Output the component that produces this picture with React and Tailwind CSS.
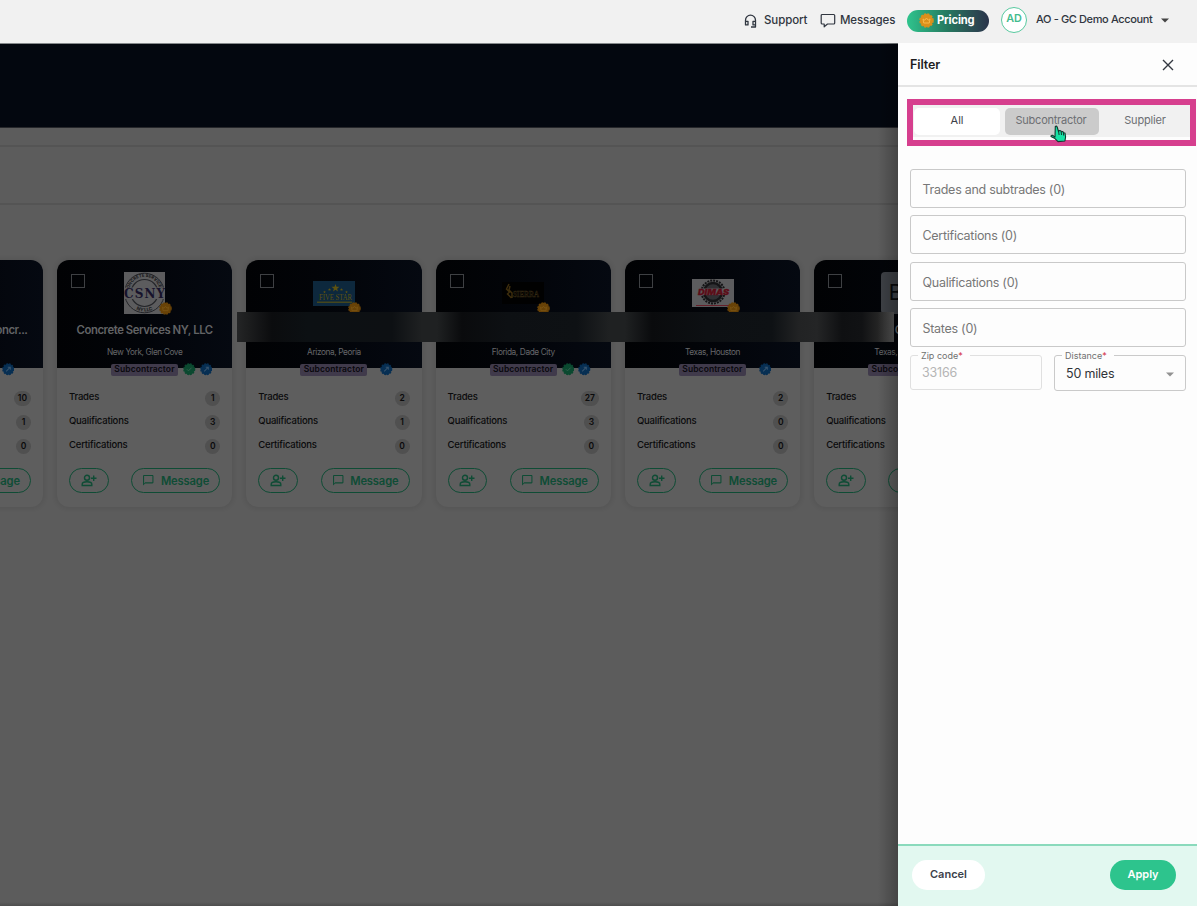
import React from "react";
import { MdChatBubbleOutline } from "react-icons/md";

function Seal({ size, color, children }) {
  return (
    <svg width={size} height={size} viewBox="0 0 24 24" className="block shrink-0">
      <circle cx="12" cy="12" r="10.4" fill={color} stroke={color} strokeWidth="2.4" strokeDasharray="3.6 1.85" />
      {children}
    </svg>
  );
}

function CrownSeal({ size, color, crown }) {
  return (
    <Seal size={size} color={color}>
      <path d="M6.500 9.500l2.700 2L12 8l2.800 3.500 2.700-2-1 6.500h-9z" fill="none" stroke={crown} strokeWidth="1.600" />
    </Seal>
  );
}

function PersonPlus() {
  return (
    <svg width="16" height="13" viewBox="0 0 16 13" fill="none" stroke="currentColor" strokeWidth="1.400" className="block">
      <circle cx="6" cy="3.700" r="2.500" />
      <path d="M1.200 11.500v-1.200c0-1.600 2.600-2.500 4.800-2.500s4.800.9 4.800 2.500v1.200z" />
      <path d="M12.700 1.500v5.600M9.900 4.300h5.600" />
    </svg>
  );
}

function CsnyLogo() {
  return (
    <svg width="41" height="42" viewBox="0 0 41 42" className="block">
      <rect width="41" height="42" fill="#5c5c5e" />
      <circle cx="20.500" cy="21" r="19.800" fill="none" stroke="#25262a" strokeWidth="1" />
      <circle cx="20.500" cy="21" r="13.500" fill="none" stroke="#25262a" strokeWidth="1.200" />
      <defs>
        <path id="csny-top" d="M5.300 20a15.200 15.200 0 0 1 30.400 0" />
        <path id="csny-bottom" d="M2 21a18.500 18.500 0 0 0 37 0" />
      </defs>
      <text fontSize="4.600" fontWeight="800" fill="#1c1c20" fontFamily="Inter, sans-serif" textLength="46" lengthAdjust="spacingAndGlyphs"><textPath href="#csny-top">CONCRETE SERVICES</textPath></text>
      <text fontSize="4.800" fontWeight="800" fill="#1c1c20" fontFamily="Inter, sans-serif"><textPath href="#csny-bottom" startOffset="50%" textAnchor="middle">NY LLC</textPath></text>
      <rect y="15.500" width="41" height="11.500" fill="#5c5c5e" />
      <text x="0" y="26" fontSize="13" fontWeight="700" fill="#17132c" fontFamily="DejaVu Serif, serif" textLength="41" lengthAdjust="spacing">
        <tspan fontSize="12">CSNY</tspan>
      </text>
    </svg>
  );
}

function FiveStarLogo() {
  const star = "M0-4L1-1.2 4-1.2 1.6.7 2.5 3.6 0 1.8-2.5 3.6-1.6.7-4-1.2-1-1.2z";
  return (
    <svg width="42" height="25" viewBox="0 0 42 25" className="block">
      <rect width="42" height="25" fill="#0d283d" />
      <g fill="#5e5210">
        <path d={star} transform="translate(22.500 7)" />
        <path d={star} transform="translate(16.500 8.500) scale(.4)" />
        <path d={star} transform="translate(28.500 8.500) scale(.4)" />
        <path d={star} transform="translate(11.500 11) scale(.35)" />
        <path d={star} transform="translate(33.500 11) scale(.35)" />
        <text x="6" y="19" fontSize="8.500" fontFamily="Liberation Serif, serif" textLength="33" lengthAdjust="spacingAndGlyphs">FIVE STAR</text>
        <rect x="4" y="20.500" width="35" height="1.500" opacity=".7" />
      </g>
    </svg>
  );
}

function GoldLogo() {
  return (
    <svg width="42" height="22" viewBox="0 0 42 22" className="block">
      <rect width="42" height="22" fill="#010101" />
      <path d="M7 2L4.500 7l3 3-2 2 4 4M8 4l-1 4 3 3v5" fill="none" stroke="#3d2d0d" strokeWidth="1.500" />
      <text x="11" y="15" fontSize="9" fontWeight="700" fill="#110e07" stroke="#352913" strokeWidth=".4" fontFamily="Liberation Serif, serif" textLength="26" lengthAdjust="spacingAndGlyphs">SIERRA</text>
    </svg>
  );
}

function DimasLogo() {
  return (
    <svg width="42" height="28" viewBox="0 0 42 28" className="block">
      <rect width="42" height="28" fill="#5c5c5e" />
      <circle cx="21" cy="13" r="11.500" fill="none" stroke="#151517" strokeWidth="2" strokeDasharray="2 1" />
      <circle cx="21" cy="13" r="9" fill="#303033" stroke="#151517" strokeWidth="2.500" />
      <rect x="6" y="9.500" width="30" height="6.500" fill="#5c5c5e" />
      <text x="6" y="15.500" fontSize="8" fontWeight="900" fontStyle="italic" fill="#5b0d18" stroke="#5b0d18" strokeWidth=".3" fontFamily="Inter, sans-serif" textLength="31" lengthAdjust="spacingAndGlyphs">DIMAS</text>
      <rect x="4" y="26" width="34" height="1" fill="#65202a" />
    </svg>
  );
}

function LetterLogo() {
  return <div className="h-[42px] w-[42px] rounded-sm bg-[#3e4146] pl-2 pt-1 text-[21px] leading-[33px] text-[#08090b]">B</div>;
}

const cards = [
  { name: "All Pro Builder Concr...", place: "", check: false, counts: [10, 1, 0] },
  { name: "Concrete Services NY, LLC", place: "New York, Glen Cove", check: true, counts: [1, 3, 0], Logo: CsnyLogo, crown: true },
  { name: "", place: "Arizona, Peoria", check: false, counts: [2, 1, 0], Logo: FiveStarLogo, crown: true },
  { name: "", place: "Florida, Dade City", check: true, counts: [27, 3, 0], Logo: GoldLogo, crown: true },
  { name: "", place: "Texas, Houston", check: false, counts: [2, 0, 0], Logo: DimasLogo, crown: true },
  { name: "Co", place: "Texas, Houston", check: false, counts: [1, 0, 0], Logo: LetterLogo, crown: false },
];
const labels = ["Trades", "Qualifications", "Certifications"];

function Card({ card, first }) {
  const { Logo } = card;
  return (
    <div className="flex h-[247px] w-[175.300px] shrink-0 flex-col rounded-[12px] bg-[#5e5e5e] shadow-[0_0_4px_2px_rgba(0,0,0,0.07)]">
      <div className="relative flex h-[107.500px] shrink-0 flex-col items-center rounded-t-[12px] bg-linear-to-r from-[#010204] to-[#050911]">
        <div className="absolute left-[14px] top-[14px] size-[14px] border border-[#3e4043]" />
        <div className="relative mt-[12px] flex h-[42px] w-[42px] items-center justify-center">
          {Logo && <Logo />}
          {card.crown && <div className="absolute -bottom-[0.500px] -right-[6px]"><CrownSeal size={13} color="#684207" crown="#7b5514" /></div>}
        </div>
        <div className={"mt-[8px] h-[16px] whitespace-nowrap text-[11.300px] font-semibold leading-[16px] tracking-[-0.420px] text-[#626365] " + (first ? "self-end pr-[15.500px]" : "")}>{card.name}</div>
        <div className="mt-[7px] h-[14px] whitespace-nowrap text-[8.300px] leading-[14px] tracking-[-0.400px] text-[#66676a]">{card.place}</div>
        <div className="absolute left-[54px] top-[103px] flex h-[13px] items-center">
          <div className="flex h-[12px] w-[67px] items-center justify-center rounded-[2px] bg-[#403a4b] text-[8.500px] font-semibold tracking-[0.100px] text-[#09080d]">Subcontractor</div>
          <div className={card.check ? "ml-[5px] w-[16.500px]" : "ml-[5px] w-[8px]"}>
            {card.check && <Seal size={12.500} color="#0b4930"><path d="M7.500 12l3 3 6-6" fill="none" stroke="#36614f" strokeWidth="1.800" /></Seal>}
          </div>
          <Seal size={12.500} color="#072f53"><path d="M8 16l7-7m-4-1h5v5" fill="none" stroke="#35526c" strokeWidth="2" /></Seal>
        </div>
      </div>
      <div className="flex flex-col px-3 pt-[18px]">
        {labels.map((l, i) => (
          <div key={l} className="flex h-6 items-center justify-between text-[9.500px] font-medium text-[#0a0a0b]">
            <span className="-mt-[1px] tracking-[-0.200px]">{l}</span>
            <span className="mt-[1px] flex h-[15px] min-w-[15px] items-center justify-center rounded-full bg-[#505050] px-[4px] text-[8.500px] font-semibold">{card.counts[i]}</span>
          </div>
        ))}
      </div>
      <div className="mt-[10.500px] flex justify-between px-3 text-[#0f4c35]">
        <div className="flex h-[25px] w-[39.500px] items-center justify-center rounded-full border border-[#0f4c35] pb-[1px]"><PersonPlus /></div>
        <div className="flex h-[25px] w-[89px] items-center justify-center gap-[6px] rounded-full border border-[#0f4c35] text-[11.200px] font-semibold tracking-[-0.150px]">
          <MdChatBubbleOutline size={12.500} />
          <span className="mt-[1px]">Message</span>
        </div>
      </div>
    </div>
  );
}

function Header() {
  return (
    <header className="flex h-[43px] shrink-0 items-center bg-[#f1f1f1] pb-[3px] pl-[744px] text-[11.500px] font-medium text-[#303640]">
      <svg width="13" height="14" viewBox="0 0 13 14" fill="none" stroke="currentColor" strokeWidth="1.300" strokeLinejoin="round" className="mt-[1px] shrink-0">
        <path d="M1.500 10.500V6.200a5 5 0 0 1 10 0v4.300M1.500 7.300H4v3.600H1.500zM11.500 7.300H9v3.600h2.500zM11.500 10.500V13H7" />
      </svg>
      <span className="ml-[7px] mt-[1px] w-[56px] shrink-0 tracking-[-0.100px]">Support</span>
      <svg width="16" height="15" viewBox="0 0 16 15" fill="none" stroke="currentColor" strokeWidth="1.200" strokeLinejoin="round" className="mt-[1px] shrink-0">
        <path d="M2.200 1.500h11.500a1 1 0 0 1 1 1v7.500a1 1 0 0 1-1 1H7.500L4.200 13.800V11h-2a1 1 0 0 1-1-1V2.500a1 1 0 0 1 1-1z" />
      </svg>
      <span className="ml-[4px] mt-[1px] w-[67px] shrink-0 tracking-[-0.120px]">Messages</span>
      <div className="mt-[1px] flex h-[22px] w-[82px] shrink-0 items-center gap-[3px] rounded-full bg-linear-to-r from-[#2fc48d] via-[#24785f] to-[#29334a] pl-[12px] font-bold text-white">
        <CrownSeal size={15} color="#db901b" crown="#f7b94a" />
        <span className="text-[11.200px] tracking-[-0.150px]">Pricing</span>
      </div>
      <div className="ml-[12px] flex size-[26px] shrink-0 items-center justify-center rounded-full border border-[#58c99f] bg-white pb-[1px] text-[10.800px] font-semibold text-[#43bb8e]">AD</div>
      <span className="-mt-[2px] ml-[9px] w-[125px] shrink-0 whitespace-nowrap text-[11px] tracking-[-0.370px]">AO - GC Demo Account</span>
      <svg width="8" height="5" viewBox="0 0 8 5" className="shrink-0"><path d="M0 .5h8l-4 4z" fill="#444" /></svg>
    </header>
  );
}

function Field({ label }) {
  return <div className="flex h-[39px] items-center rounded-[3px] border border-[#c9c9c9] px-[11.500px] pt-[4px] text-[12.500px] tracking-[-0.280px] text-[#777]">{label}</div>;
}

function LabeledField({ label, children, className }) {
  return (
    <div className={"relative flex w-[132px] items-center justify-between rounded-[3px] border px-[11px] " + className}>
      <span className="absolute -top-[6px] left-[7px] bg-[#fdfdfd] pl-[3px] pr-[7px] text-[9px] leading-[12px] tracking-normal text-[#707070]">{label}<span className="text-[#d32f3f]">*</span></span>
      {children}
    </div>
  );
}

function Cursor() {
  return (
    <svg width="17" height="18" viewBox="0 0 17 18" className="absolute left-[45px] top-[17px]">
      <path d="M5.300 1.500Q6.500.5 7.200 2l1.300 4.500.3-1 2 .3.500 1 1.500-.3 1 1.300 1.200.2.600 4-.7 4-6.900.6-3-3L1 11.500q0-1.500 1.500-1.300L5 12z" fill="#16e3a5" stroke="#12372e" strokeWidth="1.100" strokeLinejoin="round" />
      <path d="M8.600 6.500l.5 3.500M11.200 7l.3 3M13.500 8l.1 2.500" stroke="#12372e" strokeWidth="1" />
    </svg>
  );
}

function FilterPanel() {
  return (
    <aside className="flex w-[299px] shrink-0 flex-col bg-[#fdfdfd]">
      <div className="flex h-[44px] shrink-0 items-center justify-between border-b-2 border-[#e4e4e4] pl-3 pr-[23px] pt-[2px] text-[12.500px] font-semibold tracking-[-0.100px] text-[#1d1d1f]">
        Filter
        <svg width="12" height="12" viewBox="0 0 12 12"><path d="M1 1l10 10M11 1L1 11" stroke="#333841" strokeWidth="1.400" /></svg>
      </div>
      <div className="ml-[9px] mt-[12px] h-[47px] w-[289px] shrink-0 border-[6px] border-[#d63f8e] bg-[#fdfdfd] pb-[3px]">
        <div className="flex h-full items-center bg-[#f1f1f1] text-[11px] tracking-[-0.050px] text-[#6d6f73]">
          <div className="ml-[1px] flex h-[27px] w-[86px] items-center justify-center rounded-[5px] bg-white pb-[2px] text-[#3c4047]">All</div>
          <div className="relative ml-[5px] flex h-[27px] w-[94px] items-center justify-center rounded-[5px] bg-[#cbcbcb] pb-[2px] pr-[2px] tracking-[-0.250px]">Subcontractor<Cursor /></div>
          <div className="flex flex-1 items-center justify-center pb-[2px] pl-[1px] tracking-[-0.150px]">Supplier</div>
        </div>
      </div>
      <div className="mt-[22.500px] flex flex-col gap-[7.600px] pl-3 pr-[11px]">
        <Field label="Trades and subtrades (0)" />
        <Field label="Certifications (0)" />
        <Field label="Qualifications (0)" />
        <Field label="States (0)" />
        <div className="flex items-start justify-between text-[12.500px] tracking-[-0.200px]">
          <LabeledField label="Zip code" className="h-[35px] border-[#e0e0e0] pt-[2px] text-[#b5b5b5]">33166</LabeledField>
          <LabeledField label="Distance" className="h-[36px] border-[#cacaca] pt-[3px] text-[#303338]">
            50 miles
            <svg width="8" height="5" viewBox="0 0 8 5"><path d="M0 .5h8l-4 4z" fill="#929292" /></svg>
          </LabeledField>
        </div>
      </div>
      <div className="mt-auto flex h-[62px] shrink-0 items-center justify-between border-t-2 border-[#8adabc] bg-[#e2f8f0] pb-[3px] pl-[14px] pr-[21px] text-[11px] font-semibold">
        <div className="flex h-[30px] w-[73px] items-center justify-center rounded-full bg-white pb-[1px] text-[#3b414b]">Cancel</div>
        <div className="flex h-[30px] w-[66px] items-center justify-center rounded-full bg-[#2dc48d] pb-[1px] text-white">Apply</div>
      </div>
    </aside>
  );
}

export default function App() {
  return (
    <div className="flex h-[906px] w-[1197px] flex-col overflow-hidden font-['Inter',sans-serif]">
      <Header />
      <div className="flex min-h-0 flex-1">
        <main className="relative w-[898px] shrink-0 overflow-hidden bg-[#5c5c5c]">
          <div className="h-[85px] border-b border-t border-b-[#26272b] border-t-[#85898b] bg-[#03070f]" />
          <div className="mt-[17px] h-[60px] border-y-2 border-[#545454]" />
          <div className="-ml-[132.300px] mt-[55px] flex gap-[14px]">
            {cards.map((c, i) => <Card key={i} card={c} first={i === 0} />)}
          </div>
          <div className="absolute left-[237px] top-[269px] h-[30px] w-[657px] bg-[linear-gradient(90deg,#242526_0px,#1d1e1f_10px,#0b0c0e_35px,#0c1013_70px,#0d1013_155px,#1f2122_185px,#1f2122_200px,#0a0b0d_225px,#0d1013_270px,#0e1114_340px,#1f2122_372px,#1f2122_388px,#0a0b0d_415px,#0d1013_470px,#0e1114_535px,#222324_562px,#242526_580px,#0f1012_605px,#111214_625px,#242424_641px,#555_657px)]" />
          <div className="absolute inset-y-0 right-0 w-[20px] bg-linear-to-r from-transparent to-black/25" />
          <div className="absolute inset-x-0 bottom-0 h-1 bg-linear-to-b from-transparent to-black/15" />
        </main>
        <FilterPanel />
      </div>
    </div>
  );
}
